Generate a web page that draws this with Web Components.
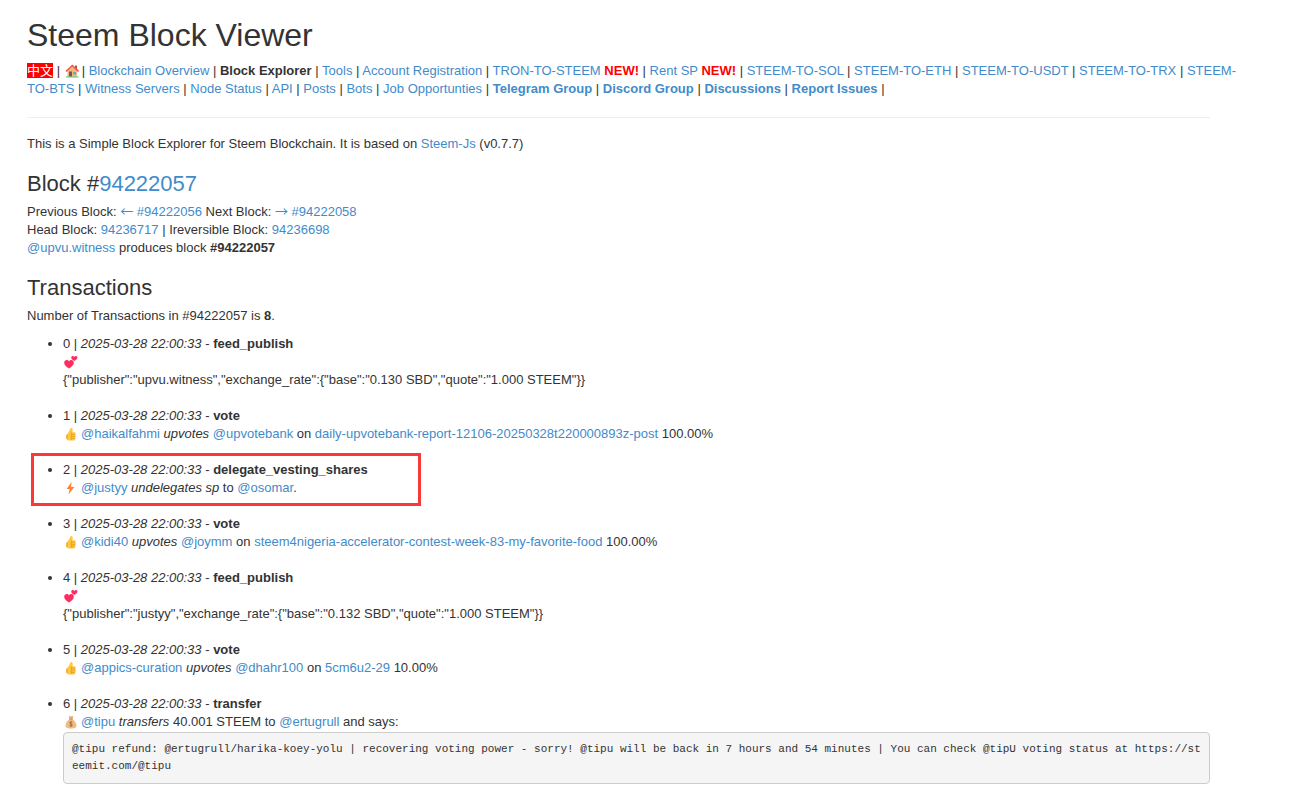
<!DOCTYPE html>
<html lang="en">
<head>
<meta charset="utf-8">
<meta name="viewport" content="width=device-width, initial-scale=1">
<title>Steem Block Viewer</title>
<style>
  body {
    margin: 0;
    background: #fff;
    color: #333;
    font: 13px/18px "Liberation Sans", Arial, "Noto Sans CJK SC", sans-serif;
  }
</style>
</head>
<body>
<block-viewer></block-viewer>

<script>
const baseStyles = `
  a { color: #428bca; text-decoration: none; }
  a:hover { text-decoration: underline; }
  p { margin: 0; }
  h2 { margin: 0 0 7px; font-size: 22px; line-height: 24px; font-weight: 400; }
`;

const icons = {
  house: `
    <path d="M10 1.500h2v4h-2z" fill="#b8533a"/>
    <path d="M2.500 7 7.300 2.500 12 7v6H2.500z" fill="#f5b583"/>
    <path d="M1 7.500 7.300 1.500 13.500 7.500" fill="none" stroke="#ee5340" stroke-width="1.600"/>
    <path d="M4 7.500h3V13H4z" fill="#7b5546"/>
    <path d="M8.300 8h2.500v2.500H8.300z" fill="#56a5cf"/>
    <path d="M1 12.300h12.500v1.300H1z" fill="#6fd08a"/>`,
  hearts: `
    <path d="M5 13.600C1.600 11.300.2 9.600.2 7.700.2 4.700 3.800 4 5 6.500 6.200 4 9.800 4.700 9.800 7.700 9.800 9.600 8.400 11.300 5 13.600z" fill="#ff2d5f"/>
    <path d="M10.300 6.100C8 4.600 7.200 3.700 7.200 2.500c0-1.800 2.300-2.200 3.100-.6.800-1.600 3.100-1.200 3.100.6 0 1.200-.8 2.100-3.100 3.600z" fill="#ff2d5f"/>`,
  thumb: `
    <path d="M2.200 8.200C3.300 7 4.800 5.500 5.500 3.600 6 2 6.300.900 7.300.900c1.500 0 1.800 1.700 1.200 4.300h1.800c1.600 0 1.700 1.700.8 2 1.200.3 1.100 1.900.1 2.200.9.400.7 1.800-.3 2 .7.700.2 2-1 2H5.400C3.400 13.400 2.200 12.300 2.200 10.500z" fill="#ffc83d"/>
    <path d="M2.200 8.200 3.600 6.800v6L2.600 12C2.200 11 2.200 9.500 2.200 8.200z" fill="#f5a825"/>
    <path d="M7.300 5.600v7.300M7.500 7.300h3.600M7.500 9.400h3.600M7.500 11.400h3.300" fill="none" stroke="#dc9420" stroke-width=".7"/>`,
  bolt: `<path d="M7.600.800 2.600 7.900h3L4.600 13.500 10.300 6H7z" fill="#ff822d"/>`,
  bag: `
    <path d="M4.500 1.600 5.700.900l1.100.6L8 .900l1.500.7-1.200 2.100H5.700z" fill="#e8b07a"/>
    <path d="M5.500 4.200h3c2.200 1.400 4 3.800 4 6 0 2-1.300 3.300-5.500 3.300s-5.500-1.300-5.500-3.300c0-2.200 1.800-4.600 4-6z" fill="#f0ba83"/>
    <path d="M5.200 4h3.600" stroke="#a97048" stroke-width=".9"/>
    <path d="M8.500 7.300C7.800 6.600 5.700 6.700 5.700 8c0 1.400 2.700.7 2.700 2.100 0 1.200-2.200 1.200-2.900.4M7 6.200v5.600" fill="none" stroke="#8d5c35" stroke-width=".7"/>`
};

class EmojiIcon extends HTMLElement {
  connectedCallback() {
    this.attachShadow({ mode: 'open' });
    this.shadowRoot.innerHTML = `
      <style>
        :host { display: inline-block; margin: 0 3px 0 1px; vertical-align: -3px; }
        svg { display: block; width: 14px; height: 14px; }
      </style>
      <svg viewBox="0 0 14 14" aria-hidden="true">${icons[this.getAttribute('name')]}</svg>
    `;
  }
}

class SiteNav extends HTMLElement {
  connectedCallback() {
    this.attachShadow({ mode: 'open' });
    this.shadowRoot.innerHTML = `
      <style>
        ${baseStyles}
        :host { display: block; margin-right: -32px; }
        .lang { background: #f00; color: #fff; }
        .new { color: #f00; }
      </style>
      <nav>
        <a class="lang" href="#zh">中文</a> |
        <a href="#home" aria-label="Home"><emoji-icon name="house"></emoji-icon></a>|
        <a href="#overview">Blockchain Overview</a> |
        <b>Block Explorer</b> |
        <a href="#tools">Tools</a> |
        <a href="#register">Account Registration</a> |
        <a href="#tron">TRON-TO-STEEM</a> <b class="new">NEW!</b> |
        <a href="#rent">Rent SP</a> <b class="new">NEW!</b> |
        <a href="#sol">STEEM-TO-SOL</a> |
        <a href="#eth">STEEM-TO-ETH</a> |
        <a href="#usdt">STEEM-TO-USDT</a> |
        <a href="#trx">STEEM-TO-TRX</a> |
        <a href="#bts">STEEM-<wbr>TO-BTS</a> |
        <a href="#witness">Witness Servers</a> |
        <a href="#nodes">Node Status</a> |
        <a href="#api">API</a> |
        <a href="#posts">Posts</a> |
        <a href="#bots">Bots</a> |
        <a href="#jobs">Job Opportunties</a> |
        <a href="#telegram"><b>Telegram Group</b></a> |
        <a href="#discord"><b>Discord Group</b></a> |
        <a href="#discussions"><b>Discussions</b></a> |
        <a href="#issues"><b>Report Issues</b></a> |
      </nav>
    `;
  }
}

class BlockSummary extends HTMLElement {
  connectedCallback() {
    this.attachShadow({ mode: 'open' });
    this.shadowRoot.innerHTML = `
      <style>
        ${baseStyles}
        :host { display: block; }
        .arrow { font-family: "Noto Sans CJK SC", sans-serif; line-height: 1; }
      </style>
      <h2>Block #<a href="#94222057">94222057</a></h2>
      <p>Previous Block: <a href="#94222056"><span class="arrow">←</span> #94222056</a> Next Block: <a href="#94222058"><span class="arrow">→</span> #94222058</a></p>
      <p>Head Block: <a href="#94236717">94236717</a> | Ireversible Block: <a href="#94236698">94236698</a></p>
      <p><a href="#upvu.witness">@upvu.witness</a> produces block <b>#94222057</b></p>
    `;
  }
}

class TxEntry extends HTMLElement {
  connectedCallback() {
    this.attachShadow({ mode: 'open' });
    this.shadowRoot.innerHTML = `
      <style>
        :host { display: block; position: relative; padding-bottom: 18px; }
        .action { height: 18px; }
        /* frame around the highlighted operation */
        :host([marked])::after {
          content: "";
          position: absolute;
          left: -32px;
          top: -8px;
          width: 384px;
          height: 47px;
          border: 3px solid #fb3838;
          pointer-events: none;
        }
      </style>
      <div>${this.getAttribute('index')} | <i>2025-03-28 22:00:33</i> - <b>${this.getAttribute('op')}</b></div>
      <div class="action"><emoji-icon name="${this.getAttribute('icon')}"></emoji-icon><slot></slot></div>
      <slot name="data"></slot>
    `;
  }
}

class TxList extends HTMLElement {
  connectedCallback() {
    this.attachShadow({ mode: 'open' });
    this.shadowRoot.innerHTML = `
      <style>
        ${baseStyles}
        :host { display: block; }
        ul { margin: 10px 0 0; padding: 0 0 0 36px; }
        pre {
          margin: 1px 0 0;
          padding: 8px;
          border: 1px solid #ccc;
          border-radius: 4px;
          background: #f5f5f5;
          font: 11px/17px "Liberation Mono", monospace;
          white-space: pre-wrap;
          word-break: break-all;
        }
      </style>
      <h2>Transactions</h2>
      <p>Number of Transactions in #94222057 is <b>8</b>.</p>
      <ul>
        <li><tx-entry index="0" op="feed_publish" icon="hearts"><div slot="data">{"publisher":"upvu.witness","exchange_rate":{"base":"0.130 SBD","quote":"1.000 STEEM"}}</div></tx-entry></li>
        <li><tx-entry index="1" op="vote" icon="thumb"><a href="#haikalfahmi">@haikalfahmi</a> <i>upvotes</i> <a href="#upvotebank">@upvotebank</a> on <a href="#post-1">daily-upvotebank-report-12106-20250328t220000893z-post</a> 100.00%</tx-entry></li>
        <li><tx-entry index="2" op="delegate_vesting_shares" icon="bolt" marked><a href="#justyy">@justyy</a> <i>undelegates sp</i> to <a href="#osomar">@osomar</a>.</tx-entry></li>
        <li><tx-entry index="3" op="vote" icon="thumb"><a href="#kidi40">@kidi40</a> <i>upvotes</i> <a href="#joymm">@joymm</a> on <a href="#post-3">steem4nigeria-accelerator-contest-week-83-my-favorite-food</a> 100.00%</tx-entry></li>
        <li><tx-entry index="4" op="feed_publish" icon="hearts"><div slot="data">{"publisher":"justyy","exchange_rate":{"base":"0.132 SBD","quote":"1.000 STEEM"}}</div></tx-entry></li>
        <li><tx-entry index="5" op="vote" icon="thumb"><a href="#appics-curation">@appics-curation</a> <i>upvotes</i> <a href="#dhahr100">@dhahr100</a> on <a href="#post-5">5cm6u2-29</a> 10.00%</tx-entry></li>
        <li><tx-entry index="6" op="transfer" icon="bag"><a href="#tipu">@tipu</a> <i>transfers</i> 40.001 STEEM to <a href="#ertugrull">@ertugrull</a> and says:<pre slot="data">@tipu refund: @ertugrull/harika-koey-yolu | recovering voting power - sorry! @tipu will be back in 7 hours and 54 minutes | You can check @tipU voting status at https://steemit.com/@tipu</pre></tx-entry></li>
      </ul>
    `;
  }
}

class BlockViewer extends HTMLElement {
  connectedCallback() {
    this.attachShadow({ mode: 'open' });
    this.shadowRoot.innerHTML = `
      <style>
        ${baseStyles}
        :host { display: block; padding: 18px 80px 0 27px; }
        h1 { margin: 0 0 10px; font-size: 32px; line-height: 34px; font-weight: 400; }
        hr { margin: 19px 0 17px; border: 0; border-top: 1px solid #eee; }
        block-summary, tx-list { margin-top: 19px; }
      </style>
      <h1>Steem Block Viewer</h1>
      <site-nav></site-nav>
      <hr>
      <p>This is a Simple Block Explorer for Steem Blockchain. It is based on <a href="#steem-js">Steem-Js</a> (v0.7.7)</p>
      <block-summary></block-summary>
      <tx-list></tx-list>
    `;
  }
}

customElements.define('emoji-icon', EmojiIcon);
customElements.define('site-nav', SiteNav);
customElements.define('block-summary', BlockSummary);
customElements.define('tx-entry', TxEntry);
customElements.define('tx-list', TxList);
customElements.define('block-viewer', BlockViewer);
</script>
</body>
</html>
